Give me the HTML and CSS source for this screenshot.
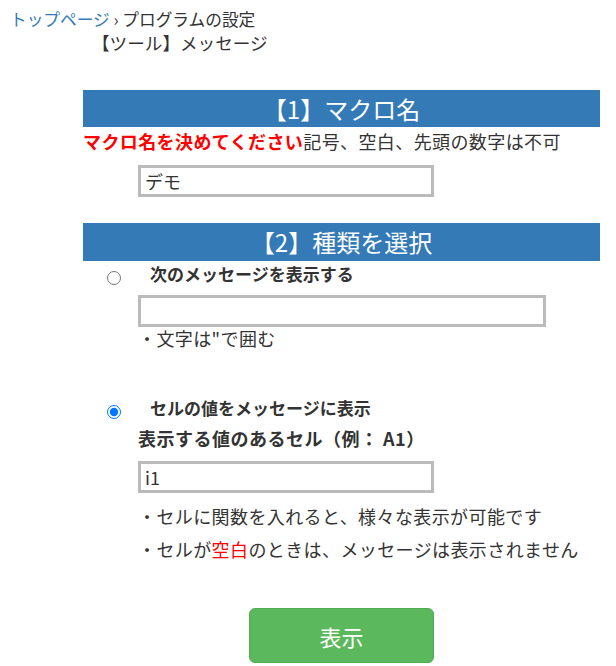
FILE: index.html
```html
<!doctype html>
<html>
<head>
<meta charset="UTF-8">
<title>メッセージ</title>
<link rel="stylesheet" href="styles.css">
</head>
<body>
	<div class="crumb">
		<a href="javascript:void(0);">トップページ</a> › プログラムの設定
		<p class="page-title">【ツール】メッセージ</p>
	</div>
	<div class="form">
		<h2 class="bar">【1】マクロ名</h2>
		<p class="lead"><strong class="red">マクロ名を決めてください</strong>記号、空白、先頭の数字は不可</p>
		<input class="text short" type="text" value="デモ">

		<h2 class="bar bar2">【2】種類を選択</h2>
		<div class="option">
			<input class="radio" type="radio" name="kind">
			<span class="label">次のメッセージを表示する</span>
		</div>
		<input class="text long" type="text" value="">
		<p class="note">・文字は"で囲む</p>

		<div class="option option2">
			<input class="radio" type="radio" name="kind" checked>
			<span class="label">セルの値をメッセージに表示</span>
		</div>
		<p class="sub">表示する値のあるセル（例： A1）</p>
		<input class="text short short2" type="text" value="i1">
		<p class="note n1">・セルに関数を入れると、様々な表示が可能です</p>
		<p class="note n2">・セルが<span class="red">空白</span>のときは、メッセージは表示されません</p>

		<div class="btn-wrap"><button class="btn" type="button">表示</button></div>
	</div>
</body>
</html>
```

FILE: styles.css
```css
*{margin:0;padding:0;box-sizing:border-box;}
body{font-family:"Noto Sans CJK JP","Noto Sans",sans-serif;color:#333;background:#fff;}
a{text-decoration:none;color:#337ab7;}
/*crumb*/
.crumb{padding:7px 0 0 10px;font-size:16.7px;line-height:24px;}
.page-title{margin-left:82px;font-size:17.6px;}
/*form*/
.form{margin:35px 0 0 83px;width:517px;}
.bar{height:37px;line-height:37px;background:#337ab7;color:#fff;font-size:24px;font-weight:400;text-align:center;}
.bar2{margin-top:26px;height:38px;line-height:38px;}
.lead{font-size:18px;line-height:28px;letter-spacing:0.4px;}
.red{color:#f00;}
.text{display:block;height:32px;margin-left:55px;border:3px solid #bbb;padding:0 4px;font-size:18px;font-family:inherit;color:#333;outline:none;}
.short{width:296px;margin-top:10px;}
.short2{margin-top:9px;}
.long{width:408px;margin-top:9px;}
/*radio rows*/
.option{display:flex;align-items:flex-start;height:24px;margin-top:1px;}
.radio{width:14px;height:14px;margin:9px 0 0 24px;flex:none;}
.label{margin-left:29px;font-size:17px;font-weight:700;line-height:24px;}
.option2{margin-top:47px;}
.sub{margin:4px 0 0 55px;font-size:18px;font-weight:700;line-height:28px;letter-spacing:0.5px;}
.note{margin-left:55px;font-size:18px;line-height:22px;letter-spacing:0.4px;}
.n1{line-height:28px;margin-top:9px;}
.n2{line-height:28px;margin-top:5px;}
/*button*/
.btn-wrap{margin-top:45px;padding-left:166px;}
.btn{width:185px;height:55px;background:#5cb85c;color:#fff;border:1px solid #4cae4c;border-radius:6px;font-size:22px;font-family:inherit;}
```
